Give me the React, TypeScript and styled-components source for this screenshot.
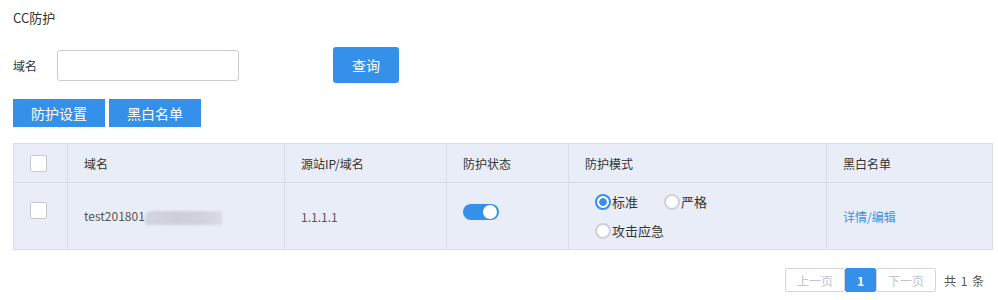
import styled, { createGlobalStyle } from "styled-components";

const GlobalStyle = createGlobalStyle`
  body {
    margin: 0;
    background: #fff;
    font-family: "Noto Sans CJK SC", "Noto Sans", sans-serif;
    color: #333;
  }
`;

const Page = styled.div`
  padding: 9px 13px 0 13px;
  width: 978px;
`;

const Title = styled.div`
  font-size: 13px;
  line-height: 18px;
  color: #333;
`;

const FilterRow = styled.div`
  display: flex;
  align-items: center;
  margin-top: 20px;
  height: 36px;
`;

const Label = styled.span`
  width: 44px;
  font-size: 12px;
  color: #333;
`;

const Input = styled.input`
  width: 182px;
  height: 31px;
  box-sizing: border-box;
  border: 1px solid #c9ccd3;
  border-radius: 3px;
  margin-right: 94px;
  outline: none;
`;

const Button = styled.button<{ $tall?: boolean; $w: number }>`
  width: ${(p) => p.$w}px;
  height: ${(p) => (p.$tall ? 36 : 28)}px;
  border: none;
  border-radius: ${(p) => (p.$tall ? 3 : 0)}px;
  background: #3590e9;
  color: #fff;
  font-family: inherit;
  font-size: 14px;
  padding: 0;
  cursor: pointer;
`;

const Toolbar = styled.div`
  display: flex;
  gap: 4px;
  margin-top: 16px;
`;

const Table = styled.table`
  margin-top: 16px;
  width: 979px;
  border-collapse: collapse;
  table-layout: fixed;
  background: #e9edf7;
  font-size: 12px;
`;

const Col = styled.col<{ $w: number }>`
  width: ${(p) => p.$w}px;
`;

const Th = styled.th`
  height: 38px;
  border: 1px solid #d9dde8;
  text-align: left;
  font-weight: normal;
  color: #333;
  padding: 0 0 0 16px;
`;

const Td = styled.td`
  height: 66px;
  border: 1px solid #d9dde8;
  padding: 0 0 0 16px;
  color: #555;
  vertical-align: middle;
`;

const Box = styled.span<{ $up?: boolean }>`
  display: block;
  width: 17px;
  height: 17px;
  box-sizing: border-box;
  border: 1px solid #c6c9d0;
  border-radius: 2px;
  background: #fff;
  margin-bottom: ${(p) => (p.$up ? 12 : 0)}px;
`;

const Blur = styled.span`
  display: inline-block;
  vertical-align: middle;
  width: 77px;
  height: 14px;
  background: linear-gradient(90deg, #d3d6e0 0%, #ccced9 40%, #d0d3dd 75%, #d8dbe5 100%);
  filter: blur(1px);
  border-radius: 6px 0 0 0;
`;

const Switch = styled.span`
  display: block;
  position: relative;
  width: 36px;
  height: 16px;
  border-radius: 8px;
  background: #3590e9;
  margin-bottom: 8px;
  &::after {
    content: "";
    position: absolute;
    right: 2px;
    top: 1px;
    width: 14px;
    height: 14px;
    border-radius: 50%;
    background: #fff;
  }
`;

const RadioGroup = styled.div`
  display: flex;
  flex-wrap: wrap;
  width: 130px;
  row-gap: 13px;
  column-gap: 26px;
  margin-left: 10px;
  font-size: 13px;
  color: #333;
`;

const Radio = styled.label<{ $on?: boolean }>`
  display: flex;
  align-items: center;
  line-height: 16px;
  &::before {
    content: "";
    width: 16px;
    height: 16px;
    box-sizing: border-box;
    border-radius: 50%;
    border: 2px solid ${(p) => (p.$on ? "#3590e9" : "#cfd1d6")};
    background: ${(p) =>
      p.$on ? "radial-gradient(circle, #3590e9 0 3.5px, #fff 4px)" : "#fff"};
    margin-right: 1px;
  }
`;

const Link = styled.a`
  color: #3590e9;
  text-decoration: none;
  font-size: 12px;
`;

const Pager = styled.div`
  display: flex;
  justify-content: flex-end;
  align-items: center;
  margin-top: 18px;
  font-size: 12px;
`;

const PageBtn = styled.span<{ $active?: boolean; $w: number }>`
  display: flex;
  align-items: center;
  justify-content: center;
  width: ${(p) => p.$w}px;
  height: 24px;
  box-sizing: border-box;
  border: 1px solid ${(p) => (p.$active ? "#3590e9" : "#d3d6de")};
  background: ${(p) => (p.$active ? "#3590e9" : "#fff")};
  color: ${(p) => (p.$active ? "#fff" : "#c0c4cc")};
  font-weight: ${(p) => (p.$active ? "bold" : "normal")};
  border-radius: 2px;
`;

const Total = styled.span`
  margin-left: 8px;
  margin-right: 7px;
  color: #555;
  font-size: 12px;
  word-spacing: 2px;
`;

export default function App() {
  return (
    <>
      <GlobalStyle />
      <Page>
        <Title>CC防护</Title>
        <FilterRow>
          <Label>域名</Label>
          <Input />
          <Button $tall $w={66}>查询</Button>
        </FilterRow>
        <Toolbar>
          <Button $w={92}>防护设置</Button>
          <Button $w={92}>黑白名单</Button>
        </Toolbar>
        <Table>
          <colgroup>
            <Col $w={54} />
            <Col $w={217} />
            <Col $w={162} />
            <Col $w={122} />
            <Col $w={258} />
            <Col $w={166} />
          </colgroup>
          <thead>
            <tr>
              <Th>
                <Box />
              </Th>
              <Th>域名</Th>
              <Th>源站IP/域名</Th>
              <Th>防护状态</Th>
              <Th>防护模式</Th>
              <Th>黑白名单</Th>
            </tr>
          </thead>
          <tbody>
            <tr>
              <Td>
                <Box $up />
              </Td>
              <Td>
                test201801<Blur />
              </Td>
              <Td>1.1.1.1</Td>
              <Td>
                <Switch />
              </Td>
              <Td>
                <RadioGroup>
                  <Radio $on>标准</Radio>
                  <Radio>严格</Radio>
                  <Radio>攻击应急</Radio>
                </RadioGroup>
              </Td>
              <Td>
                <Link href="#">详情/编辑</Link>
              </Td>
            </tr>
          </tbody>
        </Table>
        <Pager>
          <PageBtn $w={60}>上一页</PageBtn>
          <PageBtn $active $w={31}>1</PageBtn>
          <PageBtn $w={60}>下一页</PageBtn>
          <Total>共 1 条</Total>
        </Pager>
      </Page>
    </>
  );
}
